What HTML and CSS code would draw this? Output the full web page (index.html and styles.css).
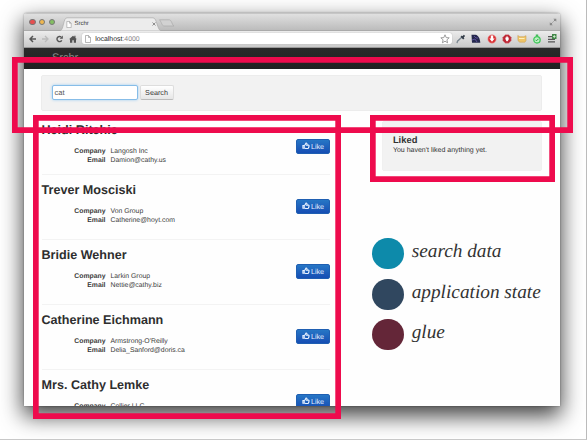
FILE: index.html
```html
<!DOCTYPE html>
<html lang="en">
<head>
<meta charset="utf-8">
<title>Srchr</title>
<link rel="stylesheet" href="styles.css">
</head>
<body>
<svg class="defs" width="0" height="0">
  <symbol id="page" viewBox="0 0 6 8"><path d="M.5.5h3L5.5 2.500v5h-5zM3.500.5v2h2" fill="#fff" stroke="#999" stroke-width=".7"/></symbol>
  <symbol id="thumb" viewBox="0 0 9 8"><path d="M1 3.400h1.500v3.200H1zM2.600 3.300C4 3 4.200 1.800 4.300.8c1.500-.3 1.600 1.200 1 2.200h1.800c1 0 1.200 1 .6 1.400.3.500.1 1-.3 1.200 0 .6-.3 1.200-1 1.200H4.100L2.600 6.200" fill="none" stroke="#e8f2ff" stroke-width="1.200"/></symbol>
</svg>
<main class="slide">
  <div class="window">
    <header class="titlebar">
      <i class="light red"></i><i class="light amber"></i><i class="light green"></i>
      <div class="tab">
        <svg class="tab-shape" viewBox="0 0 115 14" width="115" height="14"><path d="M0 14C4 13 3 .8 7 .8H93c4 0 4 12 8 13.200z" fill="#ececec" stroke="#aaa" stroke-width=".7"/><path d="M99.500 2.800h10c2 0 3 6.200 4.500 6.200h-10c-2 0-2.500-4-4.500-6.200z" fill="#d2d2d2" stroke="#aaa" stroke-width=".7"/></svg>
        <div class="tab-label"><svg width="6" height="7"><use href="#page"/></svg><span>Srchr</span><svg class="close" width="4" height="4" viewBox="0 0 4 4"><path d="M.5.5l3 3m0-3l-3 3" stroke="#777" stroke-width=".8"/></svg></div>
      </div>
      <svg class="expand" width="8" height="8" viewBox="0 0 8 8"><path d="M4.300.8h3v3zM.8 4.200v3h3z" fill="#888"/><path d="M4.500 3.500l2-2m-5 5l2-2" stroke="#888"/></svg>
    </header>
    <div class="toolbar">
      <svg width="7" height="8" viewBox="0 0 7 8"><path d="M7 4H1.500M4 1L1 4l3 3" fill="none" stroke="#555" stroke-width="1.500"/></svg>
      <svg width="7" height="8" viewBox="0 0 7 8"><path d="M0 4h5.500M3 1l3 3-3 3" fill="none" stroke="#bbb" stroke-width="1.300"/></svg>
      <svg width="7" height="8" viewBox="0 0 7 8"><path d="M5.800 5.400A2.600 2.600 0 1 1 5.200 2" fill="none" stroke="#555" stroke-width="1.400"/><path d="M6.800.5v3.200H3.700z" fill="#555"/></svg>
      <svg width="8" height="8" viewBox="0 0 8 8"><path d="M0 4.300L4 .7l1.300 1.200V.8h1.200V3L8 4.300H7v3.400H4.800V5.200H3.300v2.500H1V4.300z" fill="#555"/></svg>
      <div class="omnibox"><svg width="6" height="8"><use href="#page"/></svg><span class="url"><b>localhost</b>:4000</span><svg class="star" width="10" height="10" viewBox="0 0 10 10"><path d="M5 .8l1.200 2.800 3 .2-2.300 2 .7 3L5 7.200 2.400 8.800l.7-3-2.300-2 3-.2z" fill="#fff" stroke="#888" stroke-width=".8"/></svg></div>
      <div class="extensions">
        <svg width="10" height="10" viewBox="0 0 10 10"><path d="M1 9.200l.5-2L6 3" fill="none" stroke="#7b8790" stroke-width="1.300"/><path d="M5.200 2.200l2.600 2.600M6.500 3.500L8.500 1.400" stroke="#333c48" stroke-width="1.800"/></svg>
        <svg width="10" height="10" viewBox="0 0 10 10"><path d="M.5.8h4c3 .5 4.500 4 4.800 8H1z" fill="#25294d"/><path d="M1 6l3-1 2 3M3 2l2 2 2 0" fill="none" stroke="#6254a2" stroke-width=".9"/></svg>
        <svg width="10" height="10" viewBox="0 0 10 10"><circle cx="5" cy="5" r="4.200" fill="#d92e32" stroke="#e9a09f" stroke-width=".6"/><path d="M3.800 1.500h2.400v3h1.500L5 7.800 2.300 4.500h1.500z" fill="#fff"/></svg>
        <svg width="10" height="10" viewBox="0 0 10 10"><path d="M3.300.7h3.400l2.500 2.500v3.500L6.700 9.200H3.300L.8 6.700V3.200z" fill="#bd2735" stroke="#d88c91" stroke-width=".5"/><path d="M3.400 5V3.500h.9V2.600h1.500v1H6.700v2L5.600 7.200H4.500z" fill="#fff"/></svg>
        <svg width="10" height="10" viewBox="0 0 10 10"><path d="M.8 1.500l2 1.200h4L9 1.700v5L7.800 8.200h-5L1 6.700z" fill="#efc568" stroke="#c79849" stroke-width=".5"/><path d="M2 4.500h5.500" stroke="#fff0bb"/></svg>
        <svg width="10" height="10" viewBox="0 0 10 10"><path d="M3.800.5h2.400v2H3.800z" fill="#45ba5b"/><circle cx="5" cy="5.800" r="3.200" fill="#bdf0c2" stroke="#41c75b" stroke-width="1.300"/><path d="M3.500 5.800l1 1 2-2" fill="none" stroke="#299b42"/></svg>
        <svg width="10" height="10" viewBox="0 0 10 10"><path d="M1 2.700h6M1 5.300h7M1 7.900h7" stroke="#555" stroke-width="1.300"/><path d="M5 0h4.500v5H5z" fill="#428849"/><path d="M7.300 1v3M6 2.500h2.600" stroke="#d5f1d5" stroke-width=".8"/></svg>
      </div>
    </div>
    <div class="navbar"><span>Srchr</span></div>
    <div class="page">
      <form class="search"><span class="field">cat</span><span class="btn">Search</span></form>
      <div class="columns">
        <section class="results">
          <article class="person first"><div><h2>Heidi Ritchie</h2><dl><dt>Company</dt><dd>Langosh Inc</dd><dt>Email</dt><dd>Damion@cathy.us</dd></dl></div><span class="like"><svg width="8" height="8"><use href="#thumb"/></svg>Like</span></article>
          <article class="person"><div><h2>Trever Mosciski</h2><dl><dt>Company</dt><dd>Von Group</dd><dt>Email</dt><dd>Catherine@hoyt.com</dd></dl></div><span class="like"><svg width="8" height="8"><use href="#thumb"/></svg>Like</span></article>
          <article class="person"><div><h2>Bridie Wehner</h2><dl><dt>Company</dt><dd>Larkin Group</dd><dt>Email</dt><dd>Nettie@cathy.biz</dd></dl></div><span class="like"><svg width="8" height="8"><use href="#thumb"/></svg>Like</span></article>
          <article class="person"><div><h2>Catherine Eichmann</h2><dl><dt>Company</dt><dd>Armstrong-O'Reilly</dd><dt>Email</dt><dd>Delia_Sanford@doris.ca</dd></dl></div><span class="like"><svg width="8" height="8"><use href="#thumb"/></svg>Like</span></article>
          <article class="person"><div><h2>Mrs. Cathy Lemke</h2><dl><dt>Company</dt><dd>Collier LLC</dd></dl></div><span class="like"><svg width="8" height="8"><use href="#thumb"/></svg>Like</span></article>
        </section>
        <aside>
          <section class="liked"><h3>Liked</h3><p>You haven't liked anything yet.</p></section>
          <ul class="legend"><li><i class="teal"></i><span>search data</span></li><li><i class="navy"></i><span>application state</span></li><li><i class="wine"></i><span>glue</span></li></ul>
        </aside>
      </div>
    </div>
  </div>
  <div class="frame frame-search"></div>
  <div class="frame frame-results"></div>
  <div class="frame frame-liked"></div>
</main>
</body>
</html>
```
FILE: styles.css
```css
* { box-sizing: border-box; }
body { margin: 0; font-family: "Liberation Sans", Arial, sans-serif; color: #333; text-rendering: geometricPrecision; }
h2, h3, p, dl, dd, ul { margin: 0; padding: 0; }
svg { display: block; flex: none; }
.defs { position: absolute; }
.slide { position: relative; width: 587px; height: 440px; padding: 13px 0 0 24px; overflow: hidden; background: #fff; border-right: 1px solid #bbb; border-bottom: 1px solid #c8c8c8; }
.window { width: 536.400px; height: 392.500px; overflow: hidden; background: #fefefe; border-radius: 3px 3px 0 0; box-shadow: 0 9px 22px 1px rgba(0,0,0,.75), 0 0 2px rgba(0,0,0,.4); }
.titlebar { display: flex; align-items: center; height: 18px; padding: 0 3px 0 5px; background: linear-gradient(#e0e0e0, #bcbcbc); border-top: 1px solid #c6c6c6; border-bottom: 1px solid #aaa; }
.light { width: 6.500px; height: 6.500px; margin-right: 3.300px; border-radius: 50%; border: .5px solid #777; }
.red { background: #e64f50; } .amber { background: #efb74f; } .green { background: #83bf62; }
.tab { display: grid; width: 115px; height: 14px; margin: 4px 0 0 2px; }
.tab-shape, .tab-label { grid-area: 1 / 1; }
.tab-label { display: flex; align-items: center; gap: 2px; width: 96px; height: 14px; padding-left: 6px; font-size: 6px; color: #333; z-index: 1; }
.close { margin-left: auto; }
.expand { margin-left: auto; }
.toolbar { display: flex; align-items: center; gap: 6.300px; height: 16.500px; padding: 0 3px 0 5px; background: linear-gradient(#ececec, #cacaca); border-bottom: 1px solid #999; }
.omnibox { display: flex; align-items: center; gap: 4px; flex: 1; height: 11px; margin-left: -1px; padding: 0 2px 0 3px; background: #fff; border-radius: 2px; box-shadow: 0 0 1px #999; }
.url { padding-top: 1px; font-size: 6.900px; color: #888; }
.url b { font-weight: normal; color: #222; }
.star { margin-left: auto; }
.extensions { display: flex; gap: 5.200px; margin-left: -2px; }
.navbar { height: 21.500px; padding: 4px 0 0 28px; background: linear-gradient(#2b2b2b, #202020); color: #888; font-size: 11px; line-height: 13px; }
.page { padding: 5.500px 18px 0 17.500px; }
.search { display: flex; align-items: center; gap: 2px; height: 36px; margin-left: -.5px; padding: 0 9.500px; background: #f2f2f2; border: 1px solid #ececec; border-radius: 2px; }
.field { width: 86px; height: 15px; padding-left: 2px; background: #fff; border: 1px solid #87bde8; border-radius: 2px; box-shadow: 0 0 3px #9dcef3; font-size: 7.500px; line-height: 13px; color: #555; }
.btn { width: 34px; height: 15px; background: linear-gradient(#fff, #e6e6e6); border: 1px solid #ddd; border-bottom-color: #bbb; border-radius: 2px; font-size: 7.200px; line-height: 13px; text-align: center; }
.columns { display: flex; justify-content: space-between; padding-top: 4px; }
.results { width: 288.500px; }
.person { display: flex; justify-content: space-between; height: 65px; padding-top: 8.500px; border-bottom: 1px solid #f3f3f3; }
.person.first { height: 60px; }
.person h2 { height: 23.500px; font-size: 12.600px; line-height: 14px; white-space: nowrap; color: #2e2e2e; }
.person dl { display: grid; grid-template-columns: 64px auto; column-gap: 5px; font-size: 6.850px; line-height: 9.300px; white-space: nowrap; color: #3a3a3a; }
.person dt { font-weight: bold; text-align: right; }
.like { display: flex; align-items: center; justify-content: center; gap: 1px; width: 34px; height: 15px; margin-top: 15.500px; background: linear-gradient(#2676c5, #164eb4); border: .5px solid #1f5fb2; border-radius: 2px; font-size: 7.200px; color: #e2efff; }
aside { width: 170px; margin-right: -9.500px; }
.liked { width: 160px; height: 50px; margin-top: 6px; padding: 11.500px 0 0 10px; background: #f2f2f2; border: 1px solid #f0f0f0; border-radius: 2px; }
.liked h3 { font-size: 9.400px; line-height: 13px; }
.liked p { padding-top: .5px; font-size: 7px; line-height: 8px; white-space: nowrap; }
.legend { display: flex; flex-direction: column; gap: 9.300px; margin: 67.500px 0 0 -9.500px; list-style: none; }
.legend li { display: flex; align-items: center; gap: 8px; height: 31.300px; }
.legend i { width: 31.300px; height: 31.300px; border-radius: 50%; }
.legend span { padding-bottom: 3px; font: italic 19.300px/26px "Liberation Serif", serif; white-space: nowrap; }
.teal { background: #0d8aaa; } .navy { background: #30475f; } .wine { background: #642638; }
.frame { position: absolute; box-shadow: inset 0 0 0 5.700px #ee0b4d; }
.frame-search { left: 11.500px; top: 56.500px; width: 561.500px; height: 76px; }
.frame-results { left: 32.500px; top: 114.500px; width: 308.500px; height: 304px; }
.frame-liked { left: 370px; top: 114.500px; width: 184.500px; height: 67px; }
```
